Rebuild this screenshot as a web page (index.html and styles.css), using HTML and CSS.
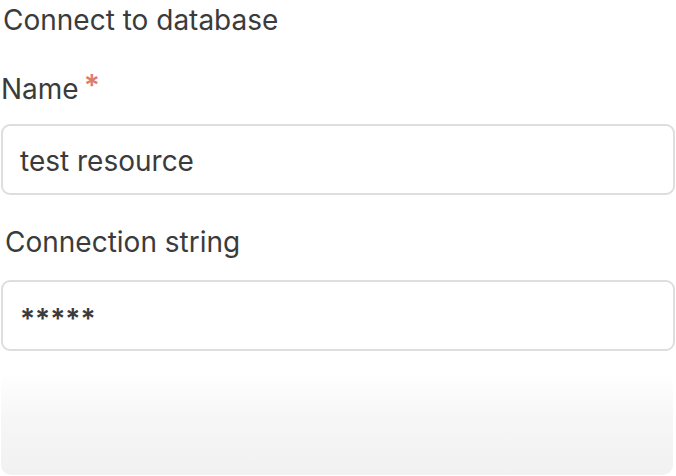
FILE: index.html
```html
<!DOCTYPE html>
<html>
<head>
<meta charset="utf-8">
<link rel="stylesheet" href="styles.css">
</head>
<body>
<div class="page">
  <div class="title">Connect to database</div>
  <div class="field">
    <label class="label">Name<span class="req">*</span></label>
    <div class="input">test resource</div>
  </div>
  <div class="field">
    <label class="label label-indent">Connection string</label>
    <div class="input input-secret">*****</div>
  </div>
  <div class="footer"></div>
</div>
</body>
</html>
```
FILE: styles.css
```css
html, body {
  margin: 0;
  padding: 0;
  background: #ffffff;
}
.page {
  width: 676px;
  height: 476px;
  overflow: hidden;
  font-family: Inter, "Liberation Sans", sans-serif;
  color: #3b3b3b;
  display: flex;
  flex-direction: column;
  padding: 0 1px 0 1px;
  box-sizing: border-box;
}
.title {
  font-size: 28px;
  line-height: 40px;
  padding-left: 2px;
}
.field {
  display: flex;
  flex-direction: column;
}
.label {
  font-size: 28px;
  line-height: 40px;
  height: 40px;
  margin-top: 29px;
  margin-bottom: 15px;
}
.label-indent {
  padding-left: 4px;
  margin-top: 27px;
  margin-bottom: 18px;
}
.req {
  color: #e07a6a;
  font-size: 30px;
  font-weight: 600;
  line-height: 0;
  margin-left: 5px;
  vertical-align: 3px;
}
.input {
  height: 71px;
  box-sizing: border-box;
  border: 2px solid #dedede;
  border-radius: 9px;
  padding: 2px 17px 0 17px;
  font-size: 28px;
  display: flex;
  align-items: center;
}
.input-secret {
  font-weight: 600;
  padding-top: 6px;
}
.footer {
  margin-top: 22px;
  width: 672px;
  height: 102px;
  border-radius: 10px;
  background: linear-gradient(to bottom, #ffffff 0%, #f7f7f7 40%, #f1f1f1 100%);
}
```
